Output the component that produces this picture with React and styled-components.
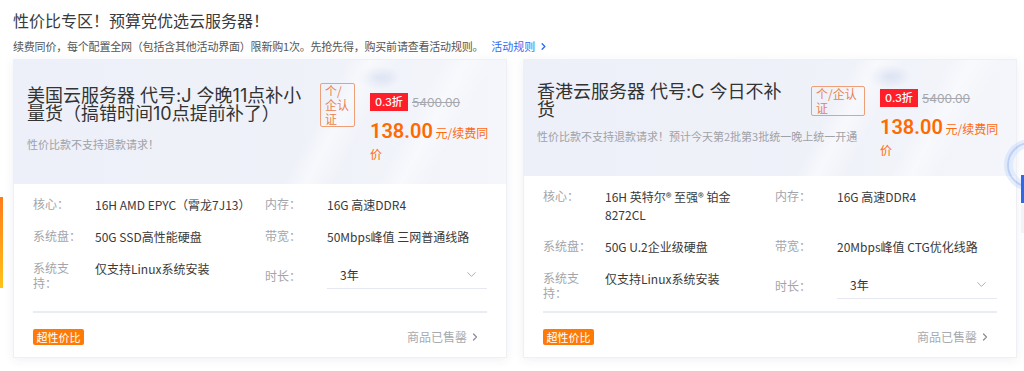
import React from "react";
import styled, { createGlobalStyle } from "styled-components";
import { ChevronDown, ChevronRight } from "lucide-react";

const servers = [
  {
    id: "us",
    title: "美国云服务器 代号:J 今晚11点补小量货（搞错时间10点提前补了）",
    tagWidth: 35,
    note: "性价比款不支持退款请求！",
    discount: "0.3折",
    original: "5400.00",
    price: "138.00",
    unit: "元/续费同价",
    specs: [
      ["核心：", "16H AMD EPYC（霄龙7J13）"],
      ["内存：", "16G 高速DDR4"],
      ["系统盘：", "50G SSD高性能硬盘"],
      ["带宽：", "50Mbps峰值 三网普通线路"],
      ["系统支持：", "仅支持Linux系统安装"],
    ],
    duration: "3年",
  },
  {
    id: "hk",
    title: "香港云服务器 代号:C 今日不补货",
    tagWidth: 54,
    note: "性价比款不支持退款请求！预计今天第2批第3批统一晚上统一开通",
    discount: "0.3折",
    original: "5400.00",
    price: "138.00",
    unit: "元/续费同价",
    specs: [
      ["核心：", "16H 英特尔® 至强® 铂金 8272CL"],
      ["内存：", "16G 高速DDR4"],
      ["系统盘：", "50G U.2企业级硬盘"],
      ["带宽：", "20Mbps峰值 CTG优化线路"],
      ["系统支持：", "仅支持Linux系统安装"],
    ],
    duration: "3年",
  },
];

export default function App() {
  return (
    <>
      <GlobalStyle />
      <Page>
        <Heading>性价比专区！预算党优选云服务器！</Heading>
        <Intro>
          续费同价，每个配置全网（包括含其他活动界面）限新购1次。先抢先得，购买前请查看活动规则。
          <RuleLink href="#">
            活动规则
            <ChevronRight size={11} strokeWidth={3} />
          </RuleLink>
        </Intro>
        <Cards>
          {servers.map((s) => (
            <Card key={s.id}>
              <Header>
                <HeaderMain>
                  <TitleRow>
                    <Title>{s.title}</Title>
                    <AuthTag width={s.tagWidth}>个/企认证</AuthTag>
                  </TitleRow>
                  <Note>{s.note}</Note>
                </HeaderMain>
                <PriceBox>
                  <DiscountRow>
                    <Discount>{s.discount}</Discount>
                    <Original>{s.original}</Original>
                  </DiscountRow>
                  <PriceLine>
                    <Price>{s.price}</Price> {s.unit}
                  </PriceLine>
                </PriceBox>
              </Header>
              <Body>
                <Specs>
                  {s.specs.map(([label, value]) => (
                    <Spec key={label}>
                      <Label>{label}</Label>
                      <Value>{value}</Value>
                    </Spec>
                  ))}
                  <Spec center>
                    <Label>时长：</Label>
                    <Select>
                      <span>{s.duration}</span>
                      <ChevronDown size={15} strokeWidth={1.3} color="#9a9ca3" />
                    </Select>
                  </Spec>
                </Specs>
                <Footer>
                  <HotBadge>超性价比</HotBadge>
                  <SoldOut>
                    商品已售罄
                    <ChevronRight size={12} strokeWidth={2.6} color="#8d8f94" />
                  </SoldOut>
                </Footer>
              </Body>
            </Card>
          ))}
        </Cards>
      </Page>
      <SideBar />
      <Float>
        <FloatRing />
        <FloatTab />
      </Float>
    </>
  );
}

const GlobalStyle = createGlobalStyle`
  html, body {
    margin: 0;
    padding: 0;
    background: #fff;
  }
  body {
    font-family: "Noto Sans CJK SC", sans-serif;
    color: #333;
    overflow: hidden;
  }
  * {
    box-sizing: border-box;
  }
`;

const Page = styled.div`
  padding: 10px 7px 0 13px;
  height: 371px;
`;

const Heading = styled.h1`
  margin: 0;
  font-size: 16px;
  line-height: 20px;
  font-weight: 400;
  color: #3a3a3a;
`;

const Intro = styled.p`
  margin: 8px 0 0;
  font-size: 11px;
  line-height: 16px;
  letter-spacing: -0.2px;
  color: #555;
`;

const RuleLink = styled.a`
  display: inline-flex;
  align-items: center;
  gap: 3px;
  margin-left: 8px;
  color: #2f6cf0;
  text-decoration: none;
  letter-spacing: 0;
  svg {
    margin-top: 1px;
  }
`;

const Cards = styled.div`
  display: grid;
  grid-template-columns: minmax(0, 1fr) minmax(0, 1fr);
  column-gap: 16px;
  margin-top: 5px;
`;

const Card = styled.div`
  min-width: 0;
  display: flex;
  flex-direction: column;
  background: #fff;
  border: 1px solid #eef0f5;
  box-shadow: 0 2px 10px rgba(40, 60, 110, 0.07);
`;

const Header = styled.div`
  display: flex;
  align-items: center;
  gap: 15px;
  padding: 23px 14px 32px 13px;
  background:
    linear-gradient(118deg, transparent 60%, rgba(255, 255, 255, 0.5) 64%, transparent 69%,
      transparent 77%, rgba(255, 255, 255, 0.45) 81%, transparent 86%),
    radial-gradient(ellipse 30px 16px at 74% 14%, rgba(206, 216, 238, 0.75), transparent 75%),
    linear-gradient(90deg, #edf0f8 0%, #eff1f9 55%, #f4f6fb 100%);
`;

const HeaderMain = styled.div`
  flex: 1;
  min-width: 0;
  display: flex;
  flex-direction: column;
  gap: 9px;
`;

const TitleRow = styled.div`
  display: flex;
  align-items: center;
  gap: 14px;
`;

const Title = styled.h2`
  flex: 1;
  min-width: 0;
  margin: 0;
  font-family: Inter, "Noto Sans CJK SC", sans-serif;
  font-size: 18px;
  line-height: 18px;
  font-weight: 400;
  color: #333;
`;

const AuthTag = styled.span`
  flex: none;
  width: ${(p) => p.width}px;
  padding: 0 4px;
  border: 1px solid #ee9f78;
  border-radius: 2px;
  font-size: 12px;
  line-height: 14px;
  color: #e8824f;
`;

const Note = styled.p`
  margin: 0;
  font-size: 11px;
  line-height: 16px;
  color: #a0a2a8;
  white-space: nowrap;
`;

const PriceBox = styled.div`
  flex: none;
  width: 122px;
  margin: 4px 0 -18px;
`;

const DiscountRow = styled.div`
  display: flex;
  align-items: center;
  gap: 4px;
`;

const Discount = styled.span`
  width: 38px;
  height: 18px;
  line-height: 18px;
  text-align: center;
  background: #ff1f2a;
  color: #fff;
  font-family: Inter, "Noto Sans CJK SC", sans-serif;
  font-size: 11px;
  font-weight: 500;
`;

const Original = styled.span`
  font-family: Inter, sans-serif;
  font-size: 12px;
  color: #a6a8ad;
  text-decoration: line-through;
`;

const PriceLine = styled.p`
  margin: 10px 0 0;
  font-size: 12px;
  line-height: 21px;
  color: #ff6a0c;
`;

const Price = styled.span`
  font-family: Roboto, sans-serif;
  font-size: 20px;
  line-height: 20px;
  font-weight: 600;
  color: #ff6a00;
`;

const Body = styled.div`
  flex: 1;
  display: flex;
  flex-direction: column;
  padding: 12px 19px 0;
`;

const Specs = styled.div`
  display: grid;
  grid-template-columns: minmax(0, 1fr) minmax(0, 1fr);
  column-gap: 10px;
  row-gap: 14px;
  margin-bottom: 11px;
`;

const Spec = styled.div`
  display: flex;
  align-items: ${(p) => (p.center ? "center" : "flex-start")};
`;

const Label = styled.span`
  flex: none;
  width: 50px;
  margin-right: 12px;
  font-size: 12px;
  line-height: 15px;
  color: #a3a5aa;
`;

const Value = styled.span`
  flex: 1;
  min-width: 0;
  font-size: 12px;
  line-height: 18px;
  color: #3a3a3a;
`;

const Select = styled.div`
  flex: 1;
  height: 28px;
  display: flex;
  align-items: center;
  justify-content: space-between;
  padding: 0 8px 0 13px;
  border-bottom: 1px solid #e6e9f2;
  font-size: 12px;
  color: #333;
`;

const Footer = styled.div`
  margin-top: auto;
  display: flex;
  align-items: center;
  justify-content: space-between;
  padding: 15px 6px 12px 0;
  border-top: 2px solid #e9ecf3;
`;

const HotBadge = styled.span`
  width: 51px;
  height: 16px;
  line-height: 16px;
  text-align: center;
  border-radius: 2px;
  background: #ff7a05;
  color: #fff;
  font-size: 11px;
`;

const SoldOut = styled.span`
  display: inline-flex;
  align-items: center;
  gap: 2px;
  font-size: 12px;
  color: #a8aaaf;
`;

const SideBar = styled.div`
  position: fixed;
  left: 0;
  top: 197px;
  width: 3px;
  height: 91px;
  background: linear-gradient(180deg, #ff7a1a, #ffc21a);
`;

const Float = styled.div`
  position: fixed;
  right: 0;
  top: 140px;
  width: 20px;
  height: 231px;
`;

const FloatRing = styled.div`
  position: absolute;
  left: 3px;
  top: 2px;
  width: 46px;
  height: 46px;
  border-radius: 50%;
  border: 2px solid rgba(120, 160, 240, 0.45);
  box-shadow: 0 0 0 3px rgba(180, 205, 250, 0.35), inset 0 0 0 4px rgba(200, 220, 255, 0.4);
`;

const FloatTab = styled.div`
  position: absolute;
  left: 17px;
  top: 35px;
  width: 6px;
  height: 28px;
  background: #2b69f0;
  box-shadow: 0 30px 0 0 #f2f3f6;
`;
